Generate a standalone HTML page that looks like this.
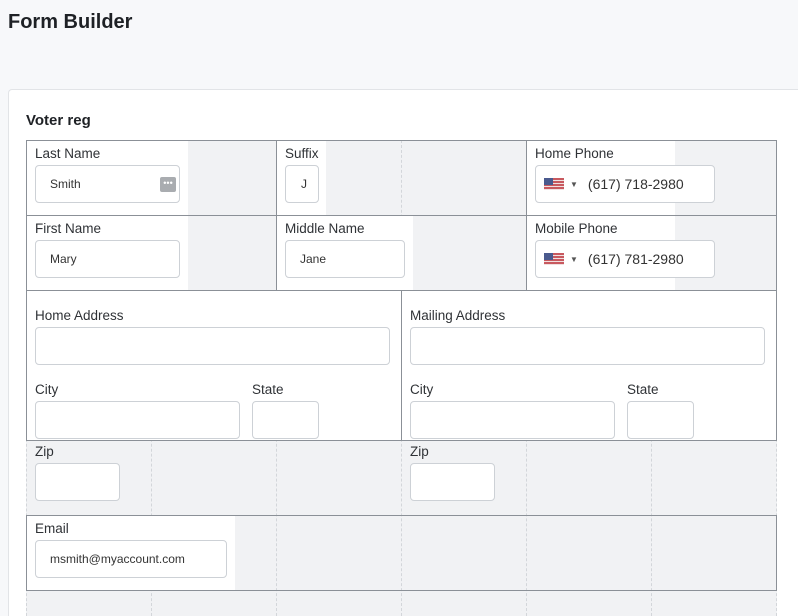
<!DOCTYPE html>
<html style="overflow:hidden;height:616px"><head><style>
*{box-sizing:border-box;margin:0;padding:0}
body{width:798px;height:616px;overflow:hidden;background:#f7f8fa;font-family:"Liberation Sans",sans-serif;position:relative;color:#333}
.a{position:absolute}
h1{position:absolute;left:8px;top:11px;font-size:20px;font-weight:bold;color:#1e2125}
.card{left:8px;top:89px;width:790px;height:527px;background:#fff;border:1px solid #e2e4e7;border-right:none;border-bottom:none;border-radius:4px 0 0 0}
.grid{left:26px;top:140px;width:751px;height:476px;background:#f1f2f4}
.dv{position:absolute;top:0;bottom:0;border-left:1px dashed #d3d6da}
.cell{position:absolute;border:1px solid #8b9097}
.w{position:absolute;background:#fff}
.lb{position:absolute;font-size:13.5px;color:#2f3236;top:0}
.in{position:absolute;background:#fff;border:1px solid #cdd1d6;border-radius:4px;font-size:12px;color:#333;padding-left:14px;display:flex;align-items:center}
.ph{font-size:14px;padding-left:8px}
.flag{width:20px;height:12px;margin-right:6px;background:repeating-linear-gradient(#c8595f 0 2px,#f0e0e0 2px 3px);position:relative}
.flag:before{content:"";position:absolute;left:0;top:0;width:9px;height:7px;background:#4a5a8e}
.car{font-size:8px;color:#555;margin-right:10px}
</style></head><body>
<h1>Form Builder</h1>
<div class="a card"></div>
<div class="a" style="left:26px;top:112px;font-size:15px;font-weight:bold;color:#1e2125">Voter reg</div>
<div class="a grid">
<div class="dv" style="left:0"></div><div class="dv" style="left:125px"></div><div class="dv" style="left:250px"></div><div class="dv" style="left:375px"></div><div class="dv" style="left:500px"></div><div class="dv" style="left:625px"></div><div class="dv" style="left:750px"></div>
</div>
<div class="w" style="left:26px;top:140px;width:162px;height:150px"></div>
<div class="w" style="left:276px;top:140px;width:50px;height:75px"></div>
<div class="w" style="left:276px;top:215px;width:137px;height:75px"></div>
<div class="w" style="left:526px;top:140px;width:149px;height:150px"></div>
<div class="w" style="left:26px;top:290px;width:750px;height:150px"></div>
<div class="w" style="left:26px;top:515px;width:209px;height:75px"></div>
<div class="cell" style="left:26px;top:140px;width:251px;height:76px"></div>
<div class="cell" style="left:276px;top:140px;width:251px;height:76px"></div>
<div class="cell" style="left:526px;top:140px;width:251px;height:76px"></div>
<div class="cell" style="left:26px;top:215px;width:251px;height:76px"></div>
<div class="cell" style="left:276px;top:215px;width:251px;height:76px"></div>
<div class="cell" style="left:526px;top:215px;width:251px;height:76px"></div>
<div class="cell" style="left:26px;top:290px;width:376px;height:151px"></div>
<div class="cell" style="left:401px;top:290px;width:376px;height:151px"></div>
<div class="cell" style="left:26px;top:515px;width:751px;height:76px"></div>
<div class="lb" style="left:35px;top:146px">Last Name</div>
<div class="in" style="left:35px;top:165px;width:145px;height:38px">Smith<span style="position:absolute;right:3px;top:11px;width:16px;height:15px;background:#a9acb0;border-radius:2px;color:#fff;font-size:9px;line-height:13px;text-align:center">•••</span></div>
<div class="lb" style="left:285px;top:146px">Suffix</div>
<div class="in" style="left:285px;top:165px;width:34px;height:38px;padding-left:15px">J</div>
<div class="lb" style="left:535px;top:146px">Home Phone</div>
<div class="in ph" style="left:535px;top:165px;width:180px;height:38px"><span class="flag"></span><span class="car">▼</span>(617) 718-2980</div>
<div class="lb" style="left:35px;top:221px">First Name</div>
<div class="in" style="left:35px;top:240px;width:145px;height:38px">Mary</div>
<div class="lb" style="left:285px;top:221px">Middle Name</div>
<div class="in" style="left:285px;top:240px;width:120px;height:38px">Jane</div>
<div class="lb" style="left:535px;top:221px">Mobile Phone</div>
<div class="in ph" style="left:535px;top:240px;width:180px;height:38px"><span class="flag"></span><span class="car">▼</span>(617) 781-2980</div>
<div class="lb" style="left:35px;top:308px">Home Address</div>
<div class="in" style="left:35px;top:327px;width:355px;height:38px"></div>
<div class="lb" style="left:35px;top:382px">City</div>
<div class="in" style="left:35px;top:401px;width:205px;height:38px"></div>
<div class="lb" style="left:252px;top:382px">State</div>
<div class="in" style="left:252px;top:401px;width:67px;height:38px"></div>
<div class="lb" style="left:410px;top:308px">Mailing Address</div>
<div class="in" style="left:410px;top:327px;width:355px;height:38px"></div>
<div class="lb" style="left:410px;top:382px">City</div>
<div class="in" style="left:410px;top:401px;width:205px;height:38px"></div>
<div class="lb" style="left:627px;top:382px">State</div>
<div class="in" style="left:627px;top:401px;width:67px;height:38px"></div>
<div class="lb" style="left:35px;top:444px">Zip</div>
<div class="in" style="left:35px;top:463px;width:85px;height:38px"></div>
<div class="lb" style="left:410px;top:444px">Zip</div>
<div class="in" style="left:410px;top:463px;width:85px;height:38px"></div>
<div class="lb" style="left:35px;top:521px">Email</div>
<div class="in" style="left:35px;top:540px;width:192px;height:38px">msmith@myaccount.com</div>
</body></html>
